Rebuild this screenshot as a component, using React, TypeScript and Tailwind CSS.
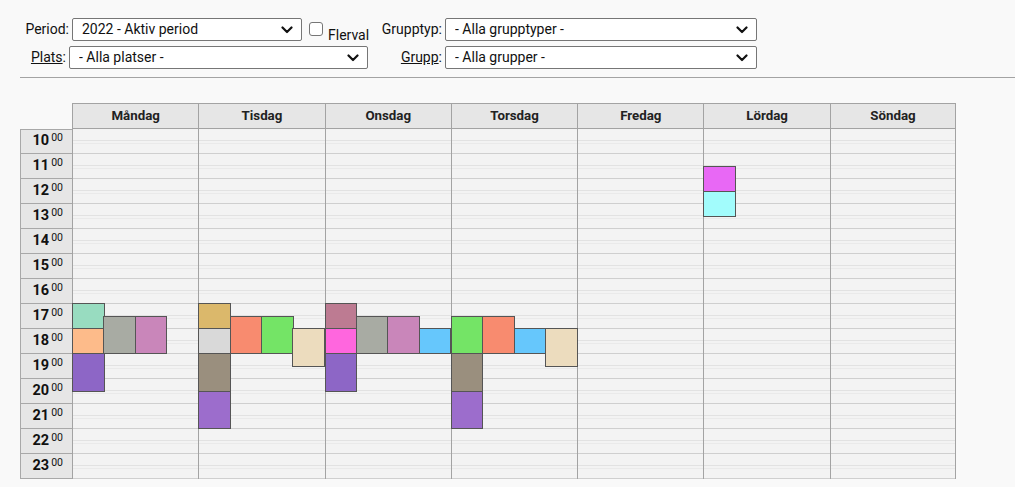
import React from "react";

type Block = { day: number; lane: number; start: number; end: number; color: string };

const DAYS = ["Måndag", "Tisdag", "Onsdag", "Torsdag", "Fredag", "Lördag", "Söndag"];
const HOURS = [10, 11, 12, 13, 14, 15, 16, 17, 18, 19, 20, 21, 22, 23];
const FIRST_HOUR = 10;
const HOUR_PX = 25;
const LANE_PX = 31.4;

const BLOCKS: Block[] = [
  // Måndag
  { day: 0, lane: 0, start: 17, end: 18, color: "#98dcc0" },
  { day: 0, lane: 0, start: 18, end: 19, color: "#fdbb8a" },
  { day: 0, lane: 0, start: 19, end: 20.5, color: "#8d66c6" },
  { day: 0, lane: 1, start: 17.5, end: 19, color: "#a8aba3" },
  { day: 0, lane: 2, start: 17.5, end: 19, color: "#c986ba" },
  // Tisdag
  { day: 1, lane: 0, start: 17, end: 18, color: "#dbb86b" },
  { day: 1, lane: 0, start: 18, end: 19, color: "#d9d9d9" },
  { day: 1, lane: 0, start: 19, end: 20.5, color: "#9a8f7e" },
  { day: 1, lane: 0, start: 20.5, end: 22, color: "#9c6dcc" },
  { day: 1, lane: 1, start: 17.5, end: 19, color: "#f88b6f" },
  { day: 1, lane: 2, start: 17.5, end: 19, color: "#74e466" },
  { day: 1, lane: 3, start: 18, end: 19.5, color: "#ecdcbe" },
  // Onsdag
  { day: 2, lane: 0, start: 17, end: 18, color: "#bd7b92" },
  { day: 2, lane: 0, start: 18, end: 19, color: "#ff66de" },
  { day: 2, lane: 0, start: 19, end: 20.5, color: "#8d66c6" },
  { day: 2, lane: 1, start: 17.5, end: 19, color: "#a8aba3" },
  { day: 2, lane: 2, start: 17.5, end: 19, color: "#c986ba" },
  { day: 2, lane: 3, start: 18, end: 19, color: "#66c7fc" },
  // Torsdag
  { day: 3, lane: 0, start: 17.5, end: 19, color: "#74e466" },
  { day: 3, lane: 0, start: 19, end: 20.5, color: "#9a8f7e" },
  { day: 3, lane: 0, start: 20.5, end: 22, color: "#9c6dcc" },
  { day: 3, lane: 1, start: 17.5, end: 19, color: "#f88b6f" },
  { day: 3, lane: 2, start: 18, end: 19, color: "#66c7fc" },
  { day: 3, lane: 3, start: 18, end: 19.5, color: "#ecdcbe" },
  // Lördag
  { day: 5, lane: 0, start: 11.5, end: 12.5, color: "#e868f5" },
  { day: 5, lane: 0, start: 12.5, end: 13.5, color: "#a2fcfc" },
];

const Chevron = () => (
  <svg width="12" height="8" viewBox="0 0 12 8" className="absolute right-[9px] top-1/2 -translate-y-1/2 pointer-events-none">
    <path d="M1.5 1.5 L6 6 L10.5 1.5" fill="none" stroke="#111" strokeWidth="2.2" strokeLinecap="round" strokeLinejoin="round" />
  </svg>
);

const FakeSelect = ({ value, width }: { value: string; width: string }) => (
  <div className={`relative h-[23px] ${width}`}>
    <select className="appearance-none w-full h-full bg-white border border-[#767676] rounded-[2px] pl-[9px] text-[14px] text-[#111] outline-none">
      <option>{value}</option>
    </select>
    <Chevron />
  </div>
);

const Filters = () => (
  <div className="pt-[18px] text-[14px] text-[#111]">
    {/* Row 1 */}
    <div className="flex items-center h-[23px]">
      <div className="w-[380px] flex items-center">
        <span className="w-[69px] text-right">Period:</span>
        <div className="ml-[3px]">
          <FakeSelect value="2022 - Aktiv period" width="w-[230px]" />
        </div>
        <div className="ml-[7px] w-[14px] h-[14px] bg-white border border-[#767676] rounded-[3px] -translate-y-[1px]" />
        <span className="ml-[5px] translate-y-[6px]">Flerval</span>
      </div>
      <span className="w-[62px] text-right">Grupptyp:</span>
      <div className="ml-[3px]">
        <FakeSelect value="- Alla grupptyper -" width="w-[312px]" />
      </div>
    </div>
    {/* Row 2 */}
    <div className="flex items-center h-[23px] mt-[5px]">
      <div className="w-[380px] flex items-center">
        <span className="w-[66px] text-right">
          <span className="underline">Plats</span>:
        </span>
        <div className="ml-[3px]">
          <FakeSelect value="- Alla platser -" width="w-[299px]" />
        </div>
      </div>
      <span className="w-[62px] text-right">
        <span className="underline">Grupp</span>:
      </span>
      <div className="ml-[3px]">
        <FakeSelect value="- Alla grupper -" width="w-[312px]" />
      </div>
    </div>
  </div>
);

const HourRowLines = () => (
  <div className="h-[25px] border-b border-[#cfcfcf] flex flex-col">
    <div className="h-[12px] border-b border-[#e2e2e2]" />
    <div className="h-[3px] border-b border-[#eaeaea]" />
  </div>
);

const DayColumn = ({ index, name }: { index: number; name: string }) => {
  const blocks = BLOCKS.filter((b) => b.day === index);
  return (
    <div className={`w-[126.3px] border-l border-[#a3a3a3] ${index === 6 ? "border-r" : ""}`}>
      <div className="h-[26px] bg-[#e6e6e6] border-t border-b border-[#a3a3a3] flex items-center justify-center text-[13.3px] font-bold text-[#222]">
        {name}
      </div>
      <div className="relative bg-[#f3f3f3]">
        {HOURS.map((h) => (
          <HourRowLines key={h} />
        ))}
        {blocks.map((b, i) => (
          <div
            key={i}
            className="absolute border border-[#555] box-border"
            style={{
              top: (b.start - FIRST_HOUR) * HOUR_PX - 1,
              left: b.lane * LANE_PX - 1,
              width: 32.5,
              height: (b.end - b.start) * HOUR_PX + 1,
              backgroundColor: b.color,
            }}
          />
        ))}
      </div>
    </div>
  );
};

export default function App() {
  return (
    <div className="w-[1015px] h-[487px] overflow-hidden bg-[#f9f9f9] font-['Roboto',sans-serif]">
      <Filters />
      <div className="ml-[20px] mt-[8px] border-t border-[#a3a3a3]" />

      <div className="flex ml-[20px] mt-[25px]">
        {/* Hour labels */}
        <div className="w-[52px] pt-[26px]">
          {HOURS.map((h, i) => (
            <div
              key={h}
              className={`h-[25px] bg-[#e6e6e6] border-l border-b border-[#a8a8a8] ${i === 0 ? "border-t" : ""} flex items-center justify-end pr-[9px] text-[#111]`}
            >
              <span className="text-[14.5px] font-bold leading-none">{h}</span>
              <span className="text-[10.5px] leading-none ml-[2px] -translate-y-[3px]">00</span>
            </div>
          ))}
        </div>
        {DAYS.map((d, i) => (
          <DayColumn key={d} index={i} name={d} />
        ))}
      </div>
    </div>
  );
}
